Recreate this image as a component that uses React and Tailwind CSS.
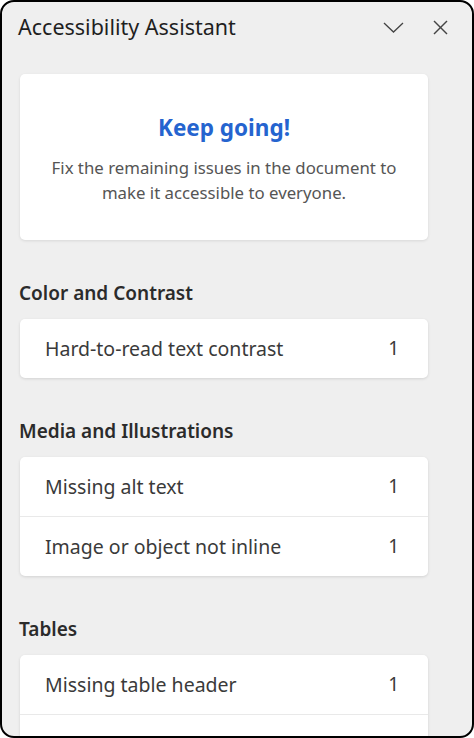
const sections = [
  { title: 'Color and Contrast', items: [{ label: 'Hard-to-read text contrast', count: 1 }] },
  {
    title: 'Media and Illustrations',
    items: [
      { label: 'Missing alt text', count: 1 },
      { label: 'Image or object not inline', count: 1 },
    ],
  },
  {
    title: 'Tables',
    items: [
      { label: 'Missing table header', count: 1 },
      // next row is scrolled out of view
      { label: '', count: null },
    ],
  },
];

function IssueGroup({ title, items }) {
  return (
    <section>
      <h2 className="mb-[14px] pl-[17px] text-[19px] font-semibold leading-[24px] text-[#2b2b2b]">{title}</h2>
      <div className="ml-[18px] w-[408px] divide-y divide-[#e9e9e9] rounded-[5px] bg-white shadow-[0_1px_3px_rgba(0,0,0,0.12)]">
        {items.map((item, i) => (
          <div key={i} className="box-content flex h-[59px] items-center justify-between pl-[25px] pr-[29px]">
            <span className="text-[19.5px] text-[#3a3a3a]">{item.label}</span>
            <span className="text-[19px] text-[#3a3a3a]">{item.count}</span>
          </div>
        ))}
      </div>
    </section>
  );
}

export default function App() {
  return (
    <div className="h-[738px] w-[474px] bg-white" style={{ fontFamily: '"Noto Sans", "Open Sans", sans-serif' }}>
      <div className="flex h-full w-full flex-col overflow-hidden rounded-[14px] border-2 border-black bg-[#efefef]">
        <header className="flex h-[50px] shrink-0 items-center justify-between pl-[16px] pr-[24px]">
          <h1 className="text-[21.5px] leading-none text-[#1f1f1f]">Accessibility Assistant</h1>
          <div className="flex items-center gap-[29px] text-[#444]">
            <svg width="21" height="11" viewBox="0 0 21 11" fill="none" stroke="currentColor" strokeWidth="1.3">
              <polyline points="1,1 10.5,10 20,1" />
            </svg>
            <svg width="15" height="15" viewBox="0 0 15 15" fill="none" stroke="currentColor" strokeWidth="1.4">
              <line x1="1" y1="1" x2="14" y2="14" />
              <line x1="14" y1="1" x2="1" y2="14" />
            </svg>
          </div>
        </header>

        <div className="mt-[22px] flex flex-col gap-[41px]">
          <div className="ml-[18px] flex h-[166px] w-[408px] flex-col items-center justify-center rounded-[5px] bg-white pt-[6px] text-center shadow-[0_1px_3px_rgba(0,0,0,0.10)]">
            <p className="text-[22.5px] font-bold leading-[26px] text-[#2564cf]">Keep going!</p>
            <p className="mt-[14px] text-[16.8px] leading-[25px] text-[#555]">
              Fix the remaining issues in the document to
              <br />
              make it accessible to everyone.
            </p>
          </div>

          {sections.map((s) => (
            <IssueGroup key={s.title} title={s.title} items={s.items} />
          ))}
        </div>
      </div>
    </div>
  );
}
